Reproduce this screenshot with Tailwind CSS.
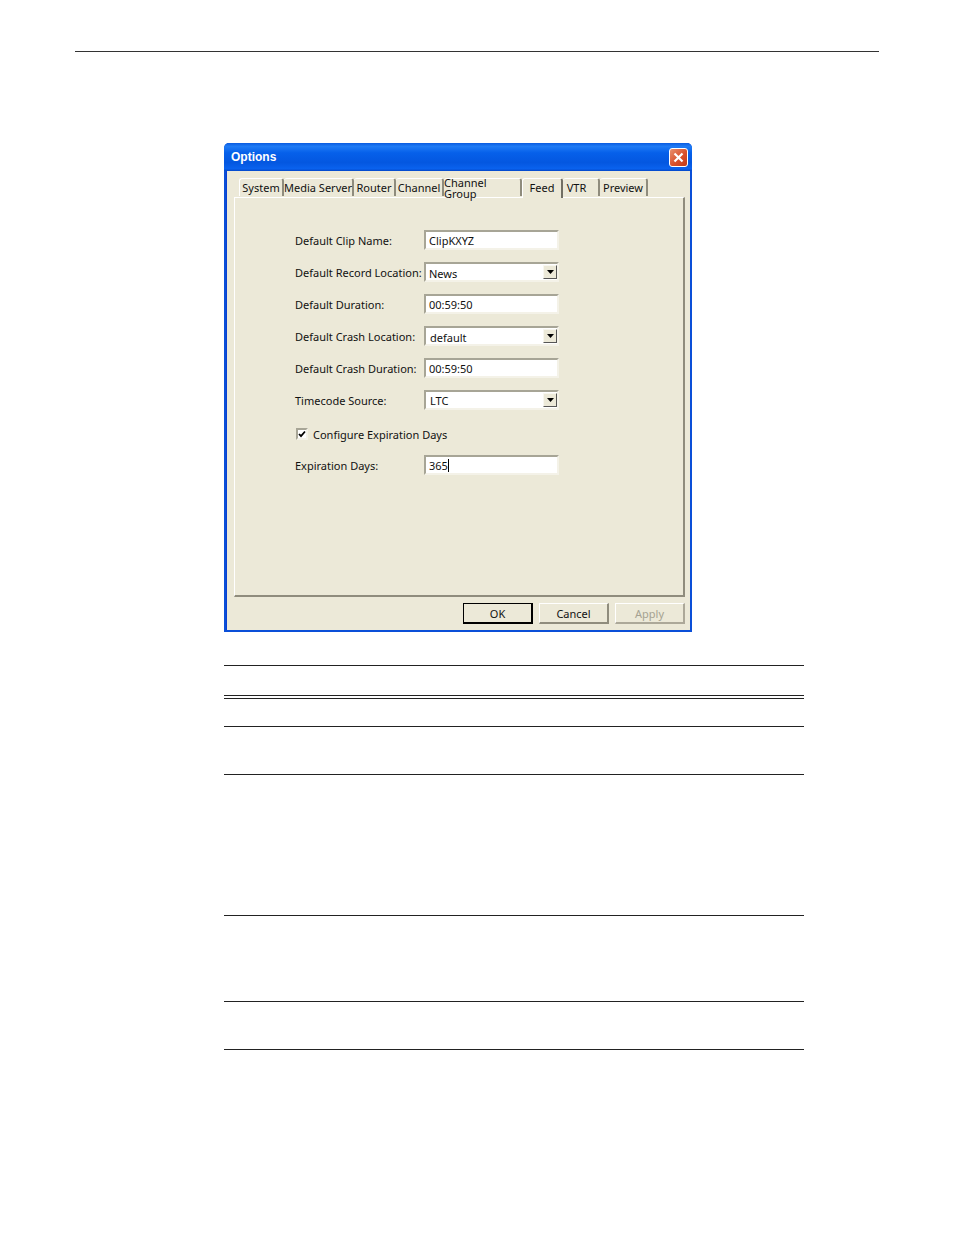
<!DOCTYPE html>
<html lang="en">
<head>
  <meta charset="UTF-8" />
  <meta name="viewport" content="width=device-width, initial-scale=1.0" />
  <title>Options</title>
  <script src="https://cdn.jsdelivr.net/npm/@tailwindcss/browser@4"></script>
</head>
<body class="bg-white">
  <div class="w-[954px] h-[1235px] overflow-hidden pt-[51px] font-['Noto_Sans',sans-serif] text-[11px] leading-none text-[#111]">
    <!-- page header rule -->
    <div class="ml-[75px] w-[804px] h-px bg-[#333]"></div>

    <!-- dialog -->
    <div class="ml-[224px] mt-[91px] w-[468px] h-[489px] flex flex-col rounded-t-[5px] bg-[#0a4fd8] px-[2px] pb-[2px]">
      <div class="h-[28px] -mx-[2px] rounded-t-[5px] flex items-center justify-between pl-[7px] pr-[4px] bg-[linear-gradient(180deg,#0a5be0_0%,#1f7bf5_12%,#0660ea_35%,#0457e0_70%,#0a62ee_92%,#0347c8_100%)]">
        <span class="text-white font-bold text-[12px] font-['Liberation_Sans',sans-serif]">Options</span>
        <div class="w-[19px] h-[19px] rounded-[3px] border border-white bg-[linear-gradient(135deg,#e8906f,#d9512c_55%,#c23a17)] flex items-center justify-center">
          <svg width="13" height="13" viewBox="0 0 13 13"><path d="M2.5 2.5 L10.5 10.5 M10.5 2.5 L2.5 10.5" stroke="#fff" stroke-width="2.2" fill="none"/></svg>
        </div>
      </div>

      <div class="flex-1 bg-[#ece9d8] border-l border-[#0a3fd0] flex flex-col pl-[7px] pr-[6px]">
        <!-- tabs -->
        <div class="flex items-end h-[26px] pl-[5px] relative z-10">
          <div class="w-[45px] h-[18px] mb-px flex items-center justify-center border-l border-t border-white border-r-2 border-r-[#8f8c7d] rounded-t-[3px]">System</div>
          <div class="w-[70px] h-[18px] mb-px flex items-center justify-center border-t border-white border-r-2 border-r-[#8f8c7d] rounded-t-[3px]">Media Server</div>
          <div class="w-[42px] h-[18px] mb-px flex items-center justify-center border-t border-white border-r-2 border-r-[#8f8c7d] rounded-t-[3px]">Router</div>
          <div class="w-[48px] h-[18px] mb-px flex items-center justify-center border-t border-white border-r-2 border-r-[#8f8c7d] rounded-t-[3px]">Channel</div>
          <div class="w-[78px] h-[18px] mb-px flex items-center justify-center border-t border-white border-r-2 border-r-[#8f8c7d] rounded-t-[3px]">Channel Group</div>
          <div class="w-[41px] h-[20px] -mb-px pb-[3px] flex items-center justify-center bg-[#ece9d8] border-l border-t border-white border-r-2 border-r-[#716f64] rounded-t-[3px]">Feed</div>
          <div class="w-[37px] h-[18px] mb-px pr-[8px] flex items-center justify-center border-t border-white border-r-2 border-r-[#8f8c7d] rounded-t-[3px]">VTR</div>
          <div class="w-[48px] h-[18px] mb-px flex items-center justify-center border-t border-white border-r-2 border-r-[#8f8c7d] rounded-t-[3px]">Preview</div>
        </div>

        <!-- panel -->
        <div class="w-[451px] h-[400px] border border-white border-r-2 border-b-2 border-r-[#8f8c7d] border-b-[#8f8c7d] pl-[60px] pt-[32px] flex flex-col">
          <div class="flex items-center h-[20px] mb-[12px]">
            <label class="w-[129px]">Default Clip Name:</label>
            <div class="w-[135px] h-[20px] bg-white border-2 border-[#a7a596] border-r-[#f4f2e8] border-b-[#f4f2e8] flex items-center pl-[3px]">ClipKXYZ</div>
          </div>
          <div class="flex items-center h-[20px] mb-[12px]">
            <label class="w-[129px]">Default Record Location:</label>
            <div class="w-[135px] h-[20px] bg-white border-2 border-[#a7a596] border-r-[#f4f2e8] border-b-[#f4f2e8] flex items-center justify-between pl-[3px] pt-[2px]">News
              <div class="w-[14px] h-[14px] -mt-[2px] bg-[#ece9d8] border border-[#f8f7f0] border-r-[#555] border-b-[#555] flex items-center justify-center"><svg width="7" height="4" viewBox="0 0 7 4"><path d="M0 0H7L3.5 4Z" fill="#000"/></svg></div>
            </div>
          </div>
          <div class="flex items-center h-[20px] mb-[12px]">
            <label class="w-[129px]">Default Duration:</label>
            <div class="w-[135px] h-[20px] bg-white border-2 border-[#a7a596] border-r-[#f4f2e8] border-b-[#f4f2e8] flex items-center pl-[3px]">00:59:50</div>
          </div>
          <div class="flex items-center h-[20px] mb-[12px]">
            <label class="w-[129px]">Default Crash Location:</label>
            <div class="w-[135px] h-[20px] bg-white border-2 border-[#a7a596] border-r-[#f4f2e8] border-b-[#f4f2e8] flex items-center justify-between pl-[4px] pt-[2px]">default
              <div class="w-[14px] h-[14px] -mt-[2px] bg-[#ece9d8] border border-[#f8f7f0] border-r-[#555] border-b-[#555] flex items-center justify-center"><svg width="7" height="4" viewBox="0 0 7 4"><path d="M0 0H7L3.5 4Z" fill="#000"/></svg></div>
            </div>
          </div>
          <div class="flex items-center h-[20px] mb-[12px]">
            <label class="w-[129px]">Default Crash Duration:</label>
            <div class="w-[135px] h-[20px] bg-white border-2 border-[#a7a596] border-r-[#f4f2e8] border-b-[#f4f2e8] flex items-center pl-[3px]">00:59:50</div>
          </div>
          <div class="flex items-center h-[20px] mb-[12px]">
            <label class="w-[129px]">Timecode Source:</label>
            <div class="w-[135px] h-[20px] bg-white border-2 border-[#a7a596] border-r-[#f4f2e8] border-b-[#f4f2e8] flex items-center justify-between pl-[4px]">LTC
              <div class="w-[14px] h-[14px] bg-[#ece9d8] border border-[#f8f7f0] border-r-[#555] border-b-[#555] flex items-center justify-center"><svg width="7" height="4" viewBox="0 0 7 4"><path d="M0 0H7L3.5 4Z" fill="#000"/></svg></div>
            </div>
          </div>
          <div class="flex items-center h-[20px] mb-[12px] mt-[2px]">
            <div class="w-[12px] h-[12px] mr-[5px] ml-px bg-white border-2 border-[#a7a596] border-r-[#f4f2e8] border-b-[#f4f2e8] flex items-center justify-center">
              <svg width="8" height="8" viewBox="0 0 8 8"><path d="M1 4 L3 6.2 L7 1.5" stroke="#000" stroke-width="1.8" fill="none"/></svg>
            </div>
            <span>Configure Expiration Days</span>
          </div>
          <div class="flex items-center h-[20px] -mt-[1px]">
            <label class="w-[129px]">Expiration Days:</label>
            <div class="w-[135px] h-[20px] bg-white border-2 border-[#a7a596] border-r-[#f4f2e8] border-b-[#f4f2e8] flex items-center pl-[3px]">365<span class="w-px h-[13px] bg-black"></span></div>
          </div>
        </div>

        <!-- buttons -->
        <div class="flex justify-end gap-[6px] pt-[6px] w-[451px]">
          <button class="w-[70px] h-[21px] border border-black border-r-2 border-b-2 bg-[#ece9d8]">OK</button>
          <button class="w-[70px] h-[21px] border border-white border-r-2 border-b-2 border-r-[#8f8c7d] border-b-[#8f8c7d] bg-[#ece9d8]">Cancel</button>
          <button class="w-[70px] h-[21px] border border-white border-r-2 border-b-2 border-r-[#aca899] border-b-[#aca899] bg-[#ece9d8] text-[#a5a291]">Apply</button>
        </div>
      </div>
    </div>

    <!-- empty table rules -->
    <div class="ml-[224px] w-[580px] mt-[33px]">
      <div class="h-[30px] border-t border-[#222]"></div>
      <div class="h-[3px] border-t border-[#222]"></div>
      <div class="h-[28px] border-t border-[#222]"></div>
      <div class="h-[48px] border-t border-[#222]"></div>
      <div class="h-[141px] border-t border-[#222]"></div>
      <div class="h-[86px] border-t border-[#222]"></div>
      <div class="h-[48px] border-t border-[#222]"></div>
      <div class="h-px bg-[#222]"></div>
    </div>
  </div>
</body>
</html>
